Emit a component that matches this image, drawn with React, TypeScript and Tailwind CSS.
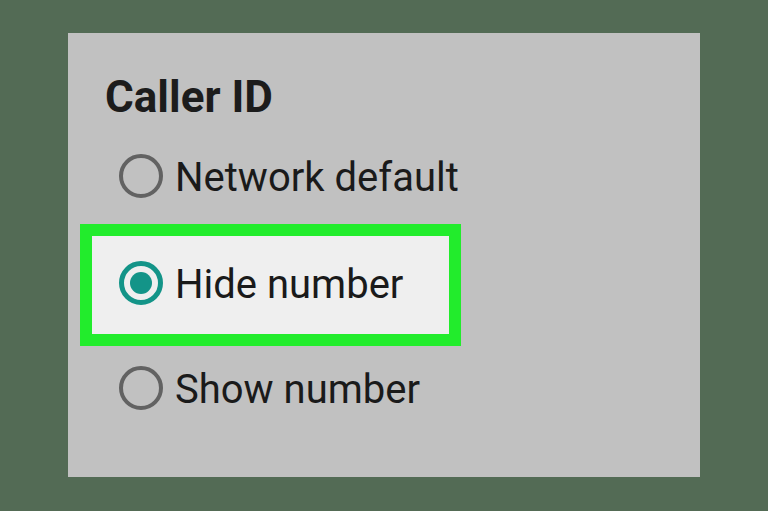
const options = [
  { label: "Network default", selected: false },
  { label: "Hide number", selected: true },
  { label: "Show number", selected: false },
];

function Radio({ selected }: { selected: boolean }) {
  if (selected) {
    return (
      <span className="flex h-[44px] w-[44px] shrink-0 items-center justify-center rounded-full border-[5px] border-[#139488]">
        <span className="h-[22px] w-[22px] rounded-full bg-[#139488]" />
      </span>
    );
  }
  return <span className="h-[44px] w-[44px] shrink-0 rounded-full border-[4px] border-[#626262]" />;
}

export default function App() {
  return (
    <div
      className="flex h-[511px] w-[768px] bg-[#536b55] pl-[68px] pt-[33px]"
      style={{ fontFamily: "Roboto, 'Noto Sans', sans-serif" }}
    >
      <div className="flex h-[444px] w-[632px] flex-col bg-[#c1c1c1] pl-[37px] pt-[42px]">
        <h1 className="text-[44px] font-bold leading-[44px] text-[#1c1c1c]">Caller ID</h1>

        <div className="mt-[33px] ml-[14px] flex h-[48px] items-center gap-[12px]">
          <Radio selected={options[0].selected} />
          <span className="mt-[4px] text-[40px] leading-[40px] text-[#1a1a1a]">{options[0].label}</span>
        </div>

        <div className="ml-[-25px] mt-[24px] flex h-[122px] w-[381px] items-center gap-[12px] border-[12px] border-[#22ec2c] bg-[#efefef] pb-[5px] pl-[27px]">
          <Radio selected={options[1].selected} />
          <span className="mt-[4px] text-[40px] leading-[40px] text-[#1a1a1a]">{options[1].label}</span>
        </div>

        <div className="mt-[18px] ml-[14px] flex h-[48px] items-center gap-[12px]">
          <Radio selected={options[2].selected} />
          <span className="mt-[4px] text-[40px] leading-[40px] text-[#1a1a1a]">{options[2].label}</span>
        </div>
      </div>
    </div>
  );
}
